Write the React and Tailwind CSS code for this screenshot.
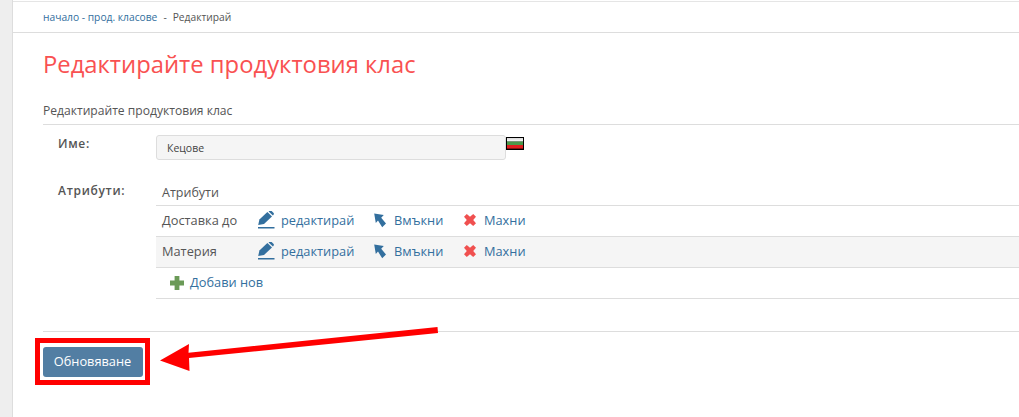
import React from "react";

const Pencil = () => (
  <svg width="17" height="18" viewBox="0 0 17 18" className="shrink-0">
    <path d="M0.2 14 L1.4 8.6 L9.4 1 L14 5.6 L6 13 Z" fill="#336f9e" />
    <path d="M10.6 .4 L11.8 -.4 Q12.8 -.6 13.6 0 L15.6 2 Q16.2 2.8 15.7 3.6 L14.9 4.6 Z" fill="#336f9e" />
    <rect x="0" y="16" width="16.5" height="1.5" fill="#336f9e" />
  </svg>
);
const ArrowUL = () => (
  <svg width="13" height="15" viewBox="0 0 13 15" className="shrink-0">
    <path d="M0.2 0.4 L9.8 2 L7.2 4.8 L12 10.4 L8.2 14.2 L4 7.6 L1.8 10 Z" fill="#336f9e" />
  </svg>
);
const Cross = () => (
  <svg width="12" height="12" viewBox="0 0 12 12" className="shrink-0">
    <path d="M2.8 0 L6 2.8 L9.2 0 L12 2.8 L9.2 6 L12 9.2 L9.2 12 L6 9.2 L2.8 12 L0 9.2 L2.8 6 L0 2.8 Z" fill="#f0504f" />
  </svg>
);
const Plus = () => (
  <svg width="14" height="14" viewBox="0 0 14 14" className="shrink-0">
    <path d="M4.6 0 H9.4 V4.6 H14 V9.4 H9.4 V14 H4.6 V9.4 H0 V4.6 H4.6 Z" fill="#6b9a57" />
  </svg>
);

const Row = ({ name, shaded }) => (
  <div className={`h-[31px] flex items-center border-b border-[#dddddd] text-[12.8px] ${shaded ? "bg-[#f5f5f5]" : ""}`}>
    <span className="w-[102px] pl-[6px] text-[#555555] shrink-0">{name}</span>
    <span className="flex items-center text-[#336f9e] -mt-[2px]">
      <Pencil />
      <span className="ml-[6px] w-[73px] mt-[1px]">редактирай</span>
      <span className="ml-[20px]"><ArrowUL /></span>
      <span className="ml-[7px] w-[50px] mt-[1px]">Вмъкни</span>
      <span className="ml-[20px]"><Cross /></span>
      <span className="ml-[8px] mt-[1px]">Махни</span>
    </span>
  </div>
);

export default function App() {
  return (
    <div className="relative h-[417px] w-[1019px] overflow-hidden bg-white flex font-['Open_Sans',sans-serif]">
      <div className="w-[13px] shrink-0 bg-[#eeeeee] border-r border-[#dddddd]" />
      <main className="flex-1 min-w-0">
        <div className="h-[2px] bg-white border-t border-[#e5e5e5] mt-[1px]" />
        <nav className="h-[30px] border-b border-[#dddddd] pl-[30px] flex items-center text-[10.25px] text-[#555555]">
          <span className="text-[#336f9e]">начало - прод. класове</span>
          <span className="ml-[6px]">-</span>
          <span className="ml-[6px]">Редактирай</span>
        </nav>
        <div className="pl-[30px]">
          <h1 className="mt-[15px] text-[23.8px] leading-[32px] font-normal text-[#f95151]">Редактирайте продуктовия клас</h1>
          <div className="mt-[20px] h-[25px] border-b border-[#dddddd] text-[12.1px] leading-[22px] text-[#555555]">
            Редактирайте продуктовия клас
          </div>
          <div className="flex pt-[10px] h-[47px]">
            <label className="w-[113px] pl-[15px] text-[12px] font-semibold tracking-[0.7px] leading-[18px] text-[#555555] shrink-0">Име:</label>
            <input readOnly value="Кецове" className="w-[350px] h-[25px] rounded-[3px] border border-[#dddddd] bg-[#f5f5f5] px-[10px] text-[10.5px] text-[#444444]" />
            <svg width="18" height="13" viewBox="0 0 18 13" className="mt-[2px] shrink-0">
              <defs>
                <linearGradient id="w" x1="0" y1="0" x2="0" y2="1">
                  <stop offset="0" stopColor="#d8d8d8" /><stop offset="1" stopColor="#ffffff" />
                </linearGradient>
              </defs>
              <rect width="18" height="13" fill="#000" />
              <rect x="1" y="1" width="16" height="3.6" fill="url(#w)" />
              <rect x="1" y="4.6" width="16" height="3.4" fill="#4a9a4a" />
              <rect x="1" y="8" width="16" height="3.6" fill="#e01f1f" />
            </svg>
          </div>
          <div className="flex pt-[8px]">
            <label className="w-[113px] pl-[15px] mt-[2px] text-[12px] font-semibold tracking-[0.7px] leading-[18px] text-[#555555] shrink-0">Атрибути:</label>
            <div className="flex-1 min-w-0">
              <div className="h-[27px] border-b border-[#dddddd] pl-[6px] text-[12.5px] leading-[26px] text-[#555555] mt-[-1px] pt-[1px]">Атрибути</div>
              <Row name="Доставка до" />
              <Row name="Материя" shaded />
              <div className="h-[31px] border-b border-[#dddddd] pl-[14px] flex items-center text-[12.8px] text-[#336f9e]">
                <Plus />
                <span className="ml-[6px]">Добави нов</span>
              </div>
            </div>
          </div>
          <div className="mt-[32px] border-t border-[#dddddd] pt-[15px]">
            <button className="block w-[100px] h-[30px] rounded-[3px] bg-[#527ea3] text-[12.8px] text-white pr-[1px]">Обновяване</button>
          </div>
        </div>
      </main>
      <div className="absolute left-[35px] top-[338px] w-[115px] h-[47px] border-[5px] border-[#ff0000]" />
      <svg className="absolute left-0 top-0 pointer-events-none" width="1019" height="417" viewBox="0 0 1019 417">
        <path d="M160 360.5 L189 344 L188.5 352.8 L437.5 327 L438 333 L189 358 L189.5 371 Z" fill="#ff0000" />
      </svg>
    </div>
  );
}
